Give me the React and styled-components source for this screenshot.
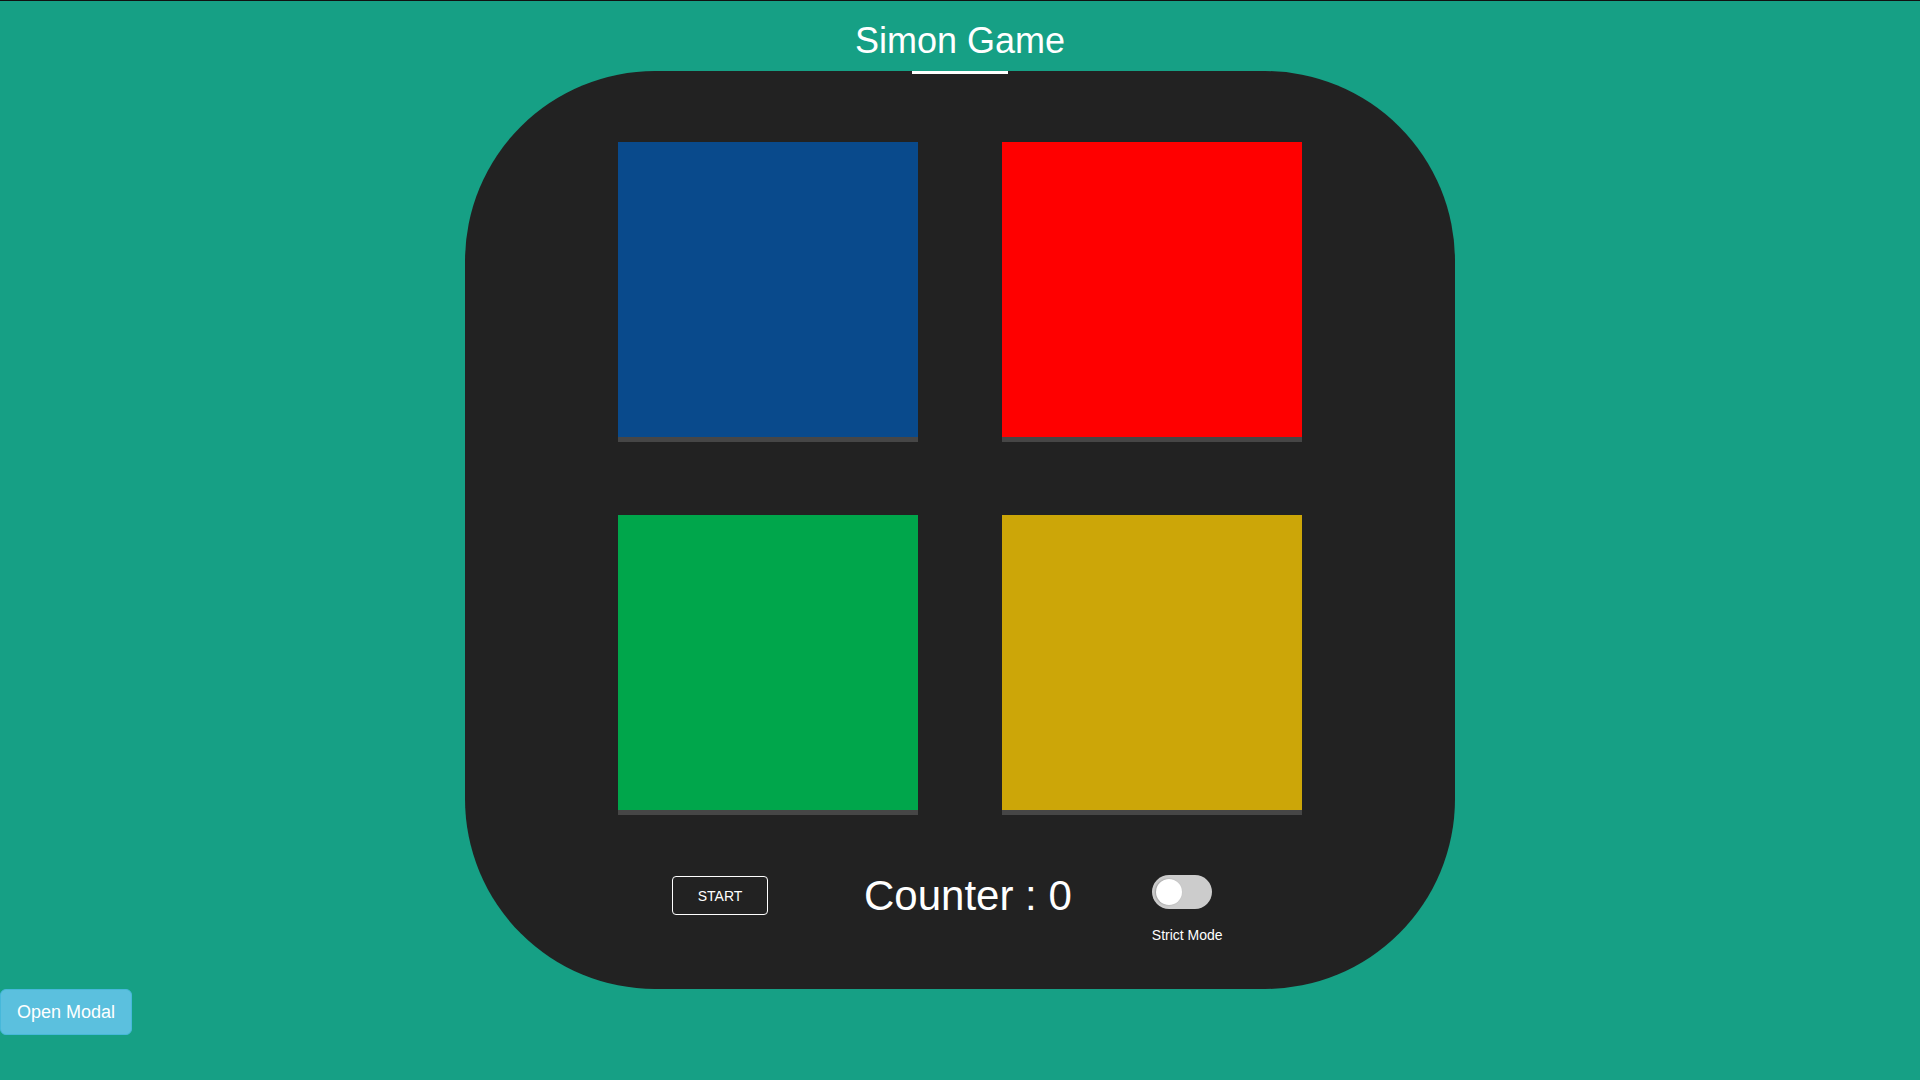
import React, { useState } from "react";
import styled, { createGlobalStyle } from "styled-components";

const GlobalStyle = createGlobalStyle`
  html, body {
    margin: 0;
    padding: 0;
    background: #16a085;
    font-family: "Liberation Sans", Arial, sans-serif;
  }
  * {
    box-sizing: border-box;
  }
`;

const Page = styled.div`
  min-height: 1080px;
  border-top: 1px solid #111;
`;

const Title = styled.h1`
  margin: 0;
  padding: 19px 0 10px;
  text-align: center;
  color: #fff;
  font-size: 36px;
  font-weight: 400;
  line-height: 41px;
`;

const Board = styled.div`
  width: 990px;
  height: 918px;
  margin: 0 auto;
  background: #222;
  border-radius: 190px;
  display: flex;
  flex-direction: column;
  align-items: center;
`;

const Underline = styled.div`
  width: 96px;
  height: 3px;
  background: #fff;
`;

const Pads = styled.div`
  margin-top: 68px;
  display: grid;
  grid-template-columns: 300px 300px;
  column-gap: 84px;
  row-gap: 73px;
`;

const Pad = styled.div`
  width: 300px;
  height: 300px;
  background: ${(p) => p.color};
  border-bottom: 5px solid #464646;
  cursor: pointer;
`;

const Controls = styled.div`
  align-self: stretch;
  margin-top: 60px;
  padding-left: 207px;
  display: flex;
  align-items: flex-start;
`;

const StartButton = styled.button`
  width: 96px;
  height: 39px;
  margin-top: 1px;
  padding: 1px 0 0;
  background: transparent;
  border: 1px solid #fff;
  border-radius: 4px;
  color: #fff;
  font-family: inherit;
  font-size: 14px;
  cursor: pointer;
`;

const Counter = styled.div`
  margin-left: 96px;
  margin-top: 1px;
  color: #fff;
  font-size: 42px;
  line-height: 40px;
`;

const StrictGroup = styled.div`
  margin-left: 80px;
  display: flex;
  flex-direction: column;
  align-items: flex-start;
`;

const Switch = styled.label`
  position: relative;
  display: inline-block;
  width: 60px;
  height: 34px;

  input {
    opacity: 0;
    width: 0;
    height: 0;
  }
`;

const Slider = styled.span`
  position: absolute;
  inset: 0;
  cursor: pointer;
  background: ${(p) => (p.on ? "#2196f3" : "#ccc")};
  border-radius: 34px;
  transition: 0.3s;

  &::before {
    content: "";
    position: absolute;
    left: 4px;
    bottom: 4px;
    width: 26px;
    height: 26px;
    border-radius: 50%;
    background: #fff;
    box-shadow: -1px 0 2px rgba(0, 0, 0, 0.25);
    transform: translateX(${(p) => (p.on ? "26px" : "0")});
    transition: 0.3s;
  }
`;

const StrictLabel = styled.span`
  margin-top: 18px;
  color: #fff;
  font-size: 14px;
  line-height: 16px;
`;

const OpenModal = styled.button`
  display: block;
  margin: 0;
  padding: 10px 16px;
  background: #5bc0de;
  border: 1px solid #46b8da;
  border-radius: 6px;
  color: #fff;
  font-family: inherit;
  font-size: 18px;
  line-height: 24px;
  cursor: pointer;
`;

const pads = ["#094a8c", "#ff0000", "#00a64b", "#cca608"];

const App = () => {
  const [strict, setStrict] = useState(false);

  return (
    <Page>
      <GlobalStyle />
      <Title>Simon Game</Title>
      <Board>
        <Underline />
        <Pads>
          {pads.map((c) => (
            <Pad key={c} color={c} />
          ))}
        </Pads>
        <Controls>
          <StartButton>START</StartButton>
          <Counter>Counter : 0</Counter>
          <StrictGroup>
            <Switch>
              <input
                type="checkbox"
                checked={strict}
                onChange={() => setStrict(!strict)}
              />
              <Slider on={strict ? 1 : 0} />
            </Switch>
            <StrictLabel>Strict Mode</StrictLabel>
          </StrictGroup>
        </Controls>
      </Board>
      <OpenModal>Open Modal</OpenModal>
    </Page>
  );
};

export default App;
